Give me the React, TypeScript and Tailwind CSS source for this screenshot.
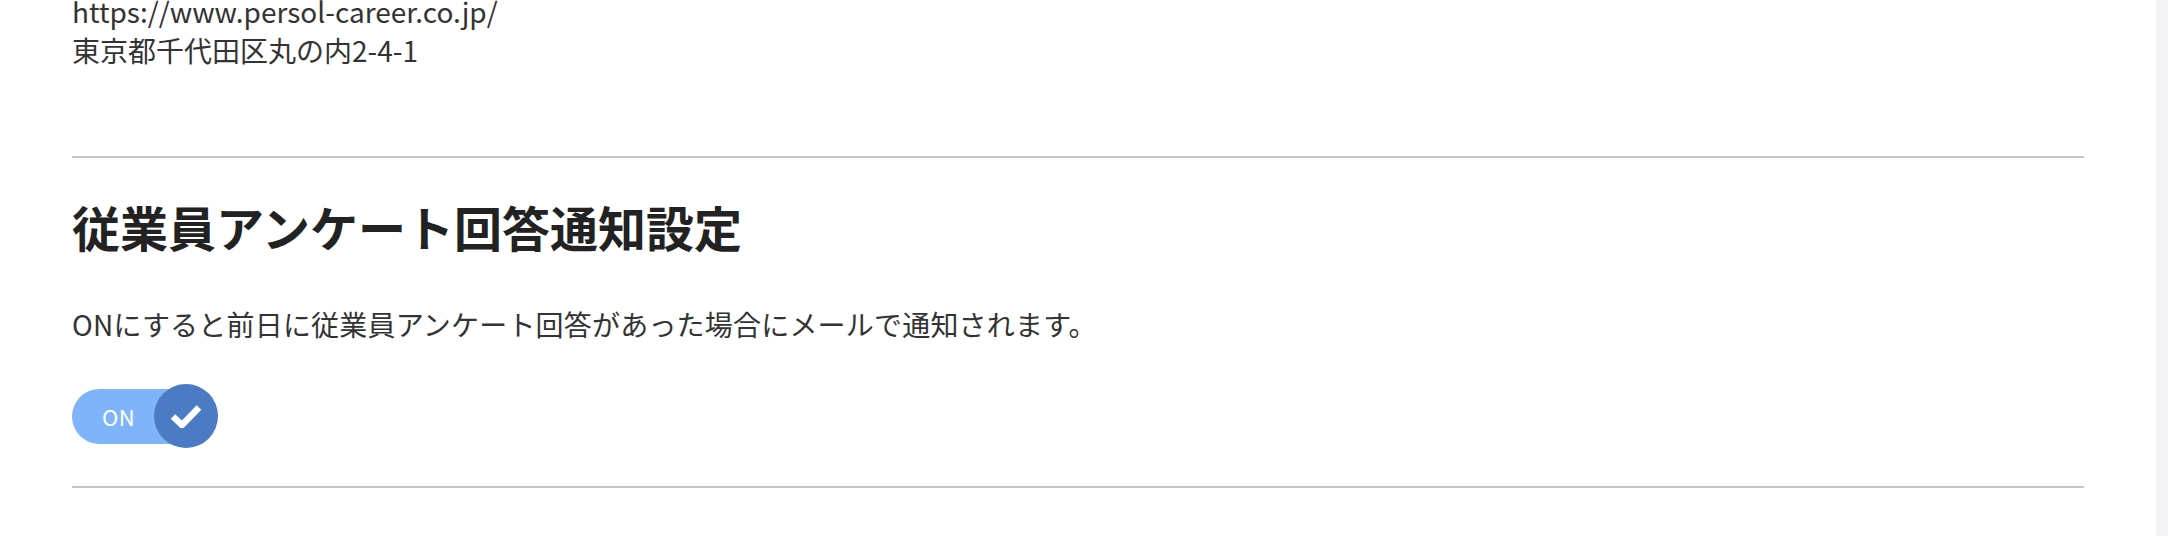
import React, { useState } from 'react';

const FONT = { fontFamily: '"Noto Sans CJK JP", "Noto Sans", sans-serif' };

const Toggle: React.FC<{ on: boolean; onChange: (v: boolean) => void }> = ({ on, onChange }) => {
  return (
    <button
      type="button"
      onClick={() => onChange(!on)}
      className="relative flex items-center h-[64px] w-[146px] outline-none"
    >
      {/* Track */}
      <span className={`flex items-center h-[55px] w-[130px] rounded-full pl-[30px] ${on ? 'bg-[#80b4fa]' : 'bg-[#c9c9c9]'}`}>
        <span className="text-[22px] leading-none text-white tracking-[0.5px]">{on ? 'ON' : 'OFF'}</span>
      </span>
      {/* Knob */}
      <span
        className={`absolute top-0 flex items-center justify-center h-[64px] w-[64px] rounded-full bg-[#4a7bc4] transition-all ${on ? 'left-[82px]' : 'left-0'}`}
      >
        <svg width="32" height="24" viewBox="0 0 32 24" fill="none">
          <polyline points="3,12.5 12,21 29,3.5" stroke="#ffffff" strokeWidth="6.5" strokeLinejoin="miter" strokeLinecap="butt" />
        </svg>
      </span>
    </button>
  );
};

export default function App() {
  const [notify, setNotify] = useState(true);

  return (
    <div className="flex min-h-screen bg-white text-[#333333]" style={FONT}>
      <main className="flex-1 px-[72px] overflow-hidden">
        {/* Company info (scrolled) */}
        <div className="-mt-[8px] text-[28px] leading-[39px]">
          <p>https://www.persol-career.co.jp/</p>
          <p>東京都千代田区丸の内2-4-1</p>
        </div>

        <hr className="mt-[86px] border-0 h-[2px] bg-[#c4c4c4]" />

        {/* Survey notification setting */}
        <section className="pt-[34px] pb-[38px]">
          <h2 className="text-[48px] leading-[68px] font-bold text-[#222222]">従業員アンケート回答通知設定</h2>
          <p className="mt-[44px] text-[28px] leading-[40px] tracking-[0.2px]">
            ONにすると前日に従業員アンケート回答があった場合にメールで通知されます。
          </p>
          <div className="mt-[40px]">
            <Toggle on={notify} onChange={setNotify} />
          </div>
        </section>

        <hr className="border-0 h-[2px] bg-[#c4c4c4]" />
      </main>
      <div className="w-[12px] bg-[#f4f4f6]" />
    </div>
  );
}
